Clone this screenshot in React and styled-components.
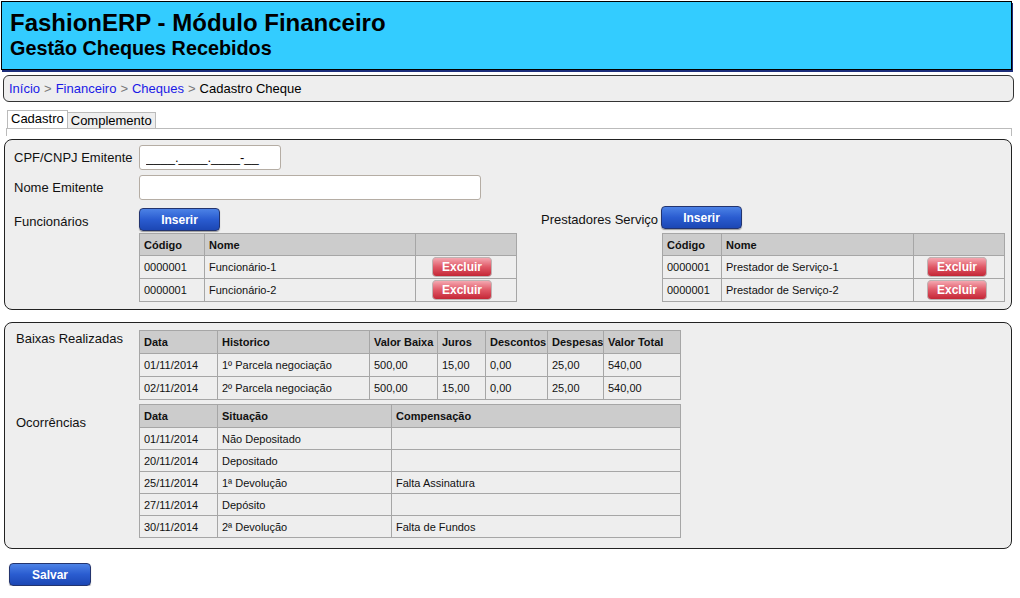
import React from "react";
import styled, { createGlobalStyle } from "styled-components";

const GlobalStyle = createGlobalStyle`
  body {
    margin: 0;
    background: #fff;
    font-family: "Liberation Sans", Arial, sans-serif;
    color: #000;
  }
`;

const funcionarios = [
  { codigo: "0000001", nome: "Funcionário-1" },
  { codigo: "0000001", nome: "Funcionário-2" },
];

const prestadores = [
  { codigo: "0000001", nome: "Prestador de Serviço-1" },
  { codigo: "0000001", nome: "Prestador de Serviço-2" },
];

const baixas = [
  ["01/11/2014", "1º Parcela negociação", "500,00", "15,00", "0,00", "25,00", "540,00"],
  ["02/11/2014", "2º Parcela negociação", "500,00", "15,00", "0,00", "25,00", "540,00"],
];

const ocorrencias = [
  ["01/11/2014", "Não Depositado", ""],
  ["20/11/2014", "Depositado", ""],
  ["25/11/2014", "1ª Devolução", "Falta Assinatura"],
  ["27/11/2014", "Depósito", ""],
  ["30/11/2014", "2ª Devolução", "Falta de Fundos"],
];

const sum = (arr) => arr.reduce((a, b) => a + b, 0);

const baixasCols = [78, 152, 68, 48, 62, 56, 77];
const ocorrCols = [78, 174, 289];

function App() {
  return (
    <Page>
      <GlobalStyle />
      <Header>
        <Title>FashionERP - Módulo Financeiro</Title>
        <Subtitle>Gestão Cheques Recebidos</Subtitle>
      </Header>

      <Breadcrumb>
        <Crumb href="#">Início</Crumb>
        <Sep>&gt;</Sep>
        <Crumb href="#">Financeiro</Crumb>
        <Sep>&gt;</Sep>
        <Crumb href="#">Cheques</Crumb>
        <Sep>&gt;</Sep>
        <span>Cadastro Cheque</span>
      </Breadcrumb>

      <Tabs>
        <Tab $active>Cadastro</Tab>
        <Tab>Complemento</Tab>
      </Tabs>
      <TabLine />

      <Panel>
        <FieldRow>
          <Label>CPF/CNPJ Emitente</Label>
          <Input $w={142} defaultValue="____.____.____-__" />
        </FieldRow>
        <FieldRow>
          <Label>Nome Emitente</Label>
          <Input $w={342} />
        </FieldRow>
        <Groups>
          <Group $labelW={125}>
            <GroupLabel>Funcionários</GroupLabel>
            <BlueButton>Inserir</BlueButton>
            <PeopleTable rows={funcionarios} cols={[65, 211, 101]} btnOffset={16} />
          </Group>
          <Group $labelW={120} $shift={-2}>
            <GroupLabel>Prestadores Serviço</GroupLabel>
            <BlueButton>Inserir</BlueButton>
            <PeopleTable rows={prestadores} cols={[59, 192, 91]} btnOffset={13} $offset />
          </Group>
        </Groups>
      </Panel>

      <Panel $second>
        <Section>
          <SectionLabel>Baixas Realizadas</SectionLabel>
          <Table $w={sum(baixasCols)}>
            <colgroup>
              {baixasCols.map((w, i) => (
                <col key={i} style={{ width: w }} />
              ))}
            </colgroup>
            <thead>
              <tr>
                {["Data", "Historico", "Valor Baixa", "Juros", "Descontos", "Despesas", "Valor Total"].map((h) => (
                  <Th key={h}>{h}</Th>
                ))}
              </tr>
            </thead>
            <tbody>
              {baixas.map((r, i) => (
                <BodyRow key={i} $h={22}>
                  {r.map((c, j) => (
                    <Td key={j}>{c}</Td>
                  ))}
                </BodyRow>
              ))}
            </tbody>
          </Table>
        </Section>
        <Section $gap>
          <SectionLabel $top={11}>Ocorrências</SectionLabel>
          <Table $w={sum(ocorrCols)}>
            <colgroup>
              {ocorrCols.map((w, i) => (
                <col key={i} style={{ width: w }} />
              ))}
            </colgroup>
            <thead>
              <tr>
                {["Data", "Situação", "Compensação"].map((h) => (
                  <Th key={h}>{h}</Th>
                ))}
              </tr>
            </thead>
            <tbody>
              {ocorrencias.map((r, i) => (
                <BodyRow key={i} $h={21}>
                  {r.map((c, j) => (
                    <Td key={j}>{c}</Td>
                  ))}
                </BodyRow>
              ))}
            </tbody>
          </Table>
        </Section>
      </Panel>

      <Footer>
        <BlueButton $wide>Salvar</BlueButton>
      </Footer>
    </Page>
  );
}

function PeopleTable({ rows, cols, btnOffset, $offset }) {
  return (
    <Table $w={sum(cols)} $offset={$offset}>
      <colgroup>
        {cols.map((w, i) => (
          <col key={i} style={{ width: w }} />
        ))}
      </colgroup>
      <thead>
        <tr>
          <Th $h={21}>Código</Th>
          <Th $h={21}>Nome</Th>
          <Th $h={21} />
        </tr>
      </thead>
      <tbody>
        {rows.map((r, i) => (
          <BodyRow key={i} $h={22}>
            <Td>{r.codigo}</Td>
            <Td>{r.nome}</Td>
            <Td $pad={btnOffset}>
              <RedButton>Excluir</RedButton>
            </Td>
          </BodyRow>
        ))}
      </tbody>
    </Table>
  );
}

export default App;

const Page = styled.div`
  width: 1020px;
  padding-top: 1px;
`;

const Header = styled.div`
  margin-left: 1px;
  width: 1011px;
  height: 69px;
  box-sizing: border-box;
  background: #33ccff;
  border: 1px solid #000;
  box-shadow: 1px 2px 0 #1c2d7a;
  padding: 7px 0 0 8px;
`;

const Title = styled.div`
  font-size: 24px;
  font-weight: bold;
  line-height: 28px;
`;

const Subtitle = styled.div`
  font-size: 19.8px;
  font-weight: bold;
  line-height: 22px;
`;

const Breadcrumb = styled.div`
  margin: 5px 0 0 3px;
  width: 1011px;
  height: 27px;
  box-sizing: border-box;
  border: 1px solid #333;
  border-radius: 6px;
  background: #eeeeee;
  padding: 0 0 0 5px;
  display: flex;
  align-items: center;
  gap: 4px;
  font-size: 13px;
`;

const Crumb = styled.a`
  color: #1a1ae6;
  text-decoration: none;
`;

const Sep = styled.span`
  color: #777;
`;

const Tabs = styled.div`
  display: flex;
  align-items: flex-end;
  margin: 8px 0 0 7px;
  height: 18px;
`;

const Tab = styled.div`
  height: ${(p) => (p.$active ? "18px" : "16px")};
  box-sizing: border-box;
  padding: 0 3px;
  font-size: 13px;
  line-height: 15px;
  border: 1px solid #bbb;
  border-bottom: none;
  background: ${(p) => (p.$active ? "#fff" : "#eee")};
  margin-left: ${(p) => (p.$active ? "0" : "-1px")};
`;

const TabLine = styled.div`
  margin-left: 6px;
  width: 1006px;
  height: 8px;
  box-sizing: border-box;
  border: 1px solid #bbb;
  border-bottom: none;
`;

const Panel = styled.div`
  margin: ${(p) => (p.$second ? "12px" : "3px")} 0 0 4px;
  width: 1008px;
  box-sizing: border-box;
  border: 1px solid #222;
  border-radius: 8px;
  background: #eeeeee;
  padding: ${(p) => (p.$second ? "7px 0 10px 11px" : "5px 0 7px 9px")};
`;

const FieldRow = styled.div`
  display: flex;
  align-items: center;
  height: 25px;
  margin-bottom: 5px;
`;

const Label = styled.div`
  width: 125px;
  font-size: 13px;
  color: #111;
`;

const Input = styled.input`
  width: ${(p) => p.$w}px;
  height: 25px;
  box-sizing: border-box;
  border: 1px solid #b5ada4;
  border-radius: 3px;
  background: #fff;
  font-family: "Liberation Sans", Arial, sans-serif;
  font-size: 13px;
  padding: 0 6px;
  outline: none;
`;

const Groups = styled.div`
  display: flex;
  gap: 24px;
  margin-top: 8px;
`;

const Group = styled.div`
  display: grid;
  grid-template-columns: ${(p) => p.$labelW}px auto;
  grid-template-rows: auto auto;
  align-items: start;
  justify-items: start;
  margin-top: ${(p) => p.$shift || 0}px;
  & > table {
    grid-column: 2;
    margin-top: ${(p) => (p.$shift ? 4 : 2)}px;
  }
`;

const GroupLabel = styled.div`
  font-size: 13px;
  color: #111;
  padding-top: 6px;
`;

const BlueButton = styled.button`
  width: ${(p) => (p.$wide ? "82px" : "81px")};
  height: 23px;
  border: 1px solid #23346e;
  border-radius: 4px;
  background: linear-gradient(#4c82e6, #2a5cd0 50%, #1c47b4);
  color: #fff;
  font-family: "Liberation Sans", Arial, sans-serif;
  font-weight: bold;
  font-size: 12px;
  padding: 0;
  box-shadow: 0 1px 1px rgba(0, 0, 0, 0.35);
`;

const RedButton = styled.button`
  width: 60px;
  height: 20px;
  border: 1px solid #bdb3b3;
  border-radius: 4px;
  background: linear-gradient(#f4a7b0, #e05866 50%, #c42636);
  color: #fff;
  font-family: "Liberation Sans", Arial, sans-serif;
  font-weight: bold;
  font-size: 12px;
  padding: 0;
  display: block;
`;

const Table = styled.table`
  width: ${(p) => p.$w}px;
  border-collapse: collapse;
  table-layout: fixed;
  font-size: 11px;
  margin-left: ${(p) => (p.$offset ? "1px" : "0")};
`;

const Th = styled.th`
  height: ${(p) => p.$h ?? 22}px;
  background: #cccccc;
  border: 1px solid #a6a6a6;
  text-align: left;
  font-weight: bold;
  padding: 0 0 0 4px;
  color: #111;
  white-space: nowrap;
  overflow: hidden;
`;

const Td = styled.td`
  border: 1px solid #a6a6a6;
  padding: 0 0 0 ${(p) => (p.$pad != null ? p.$pad : 4)}px;
  color: #111;
  white-space: nowrap;
`;

const BodyRow = styled.tr`
  & > td {
    height: ${(p) => p.$h}px;
  }
`;

const Section = styled.div`
  display: grid;
  grid-template-columns: 123px auto;
  align-items: start;
  justify-items: start;
  margin-top: ${(p) => (p.$gap ? "4px" : "0")};
`;

const SectionLabel = styled.div`
  font-size: 13px;
  color: #111;
  padding-top: ${(p) => p.$top ?? 1}px;
`;

const Footer = styled.div`
  padding: 14px 0 0 9px;
`;
